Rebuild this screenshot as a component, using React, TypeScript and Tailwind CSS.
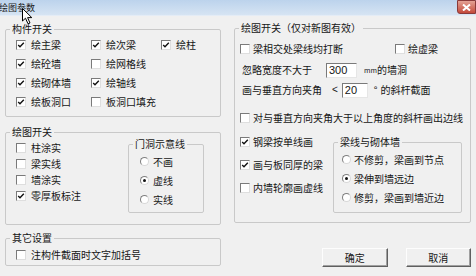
import * as React from "react";

function Box({ checked }: { checked?: boolean }) {
  return (
    <span className="flex h-[10px] w-[10px] shrink-0 items-center justify-center border border-t-[#7a7a7a] border-l-[#7a7a7a] border-b-[#dedede] border-r-[#dedede] bg-white">
      {checked && (
        <svg width="8" height="8" viewBox="0 0 8 8">
          <polyline points="1.2,4 3,5.8 6.8,1.8" fill="none" stroke="#111" strokeWidth="1.4" />
        </svg>
      )}
    </span>
  );
}

function Check({ label, checked, tight }: { label: string; checked?: boolean; tight?: boolean }) {
  return (
    <div className="flex items-center whitespace-nowrap">
      <Box checked={checked} />
      <span className={tight ? "ml-[3px]" : "ml-[5px]"}>{label}</span>
    </div>
  );
}

function Radio({ label, checked, tight }: { label: string; checked?: boolean; tight?: boolean }) {
  return (
    <div className="flex h-[19px] items-center whitespace-nowrap">
      <span className="flex h-[9px] w-[9px] shrink-0 items-center justify-center rounded-full border border-t-[#7f7f7f] border-l-[#7f7f7f] border-b-[#d8d8d8] border-r-[#d8d8d8] bg-white">
        {checked && <span className="h-[3px] w-[3px] rounded-full bg-[#111]" />}
      </span>
      <span className={tight ? "ml-[3px]" : "ml-[4px]"}>{label}</span>
    </div>
  );
}

function Group({ title, className, children }: { title: string; className?: string; children?: React.ReactNode }) {
  return (
    <fieldset className={"rounded-[2px] border border-[#c9c9c9] " + (className ?? "")}>
      <legend className="ml-[4px] px-[2px] text-[10px] leading-[12px]">{title}</legend>
      {children}
    </fieldset>
  );
}

function Btn({ label }: { label: string }) {
  return (
    <div className="flex h-[19px] w-[66px] items-center justify-center border border-t-[#fdfdfd] border-l-[#fdfdfd] border-b-[#5f5f5f] border-r-[#5f5f5f] bg-[#f0f0f0] shadow-[inset_-1px_-1px_0_#a0a0a0]">
      {label}
    </div>
  );
}

export default function App() {
  return (
    <div className="relative h-[276px] w-[476px] overflow-hidden bg-[#f0f0f0] font-['Noto_Sans_CJK_SC','Noto_Sans',sans-serif] text-[10px] leading-[12px] text-[#161616]">
      {/* title bar */}
      <div className="flex h-[16px] items-start justify-between border-b border-[#e4ecf6] bg-linear-to-b from-[#bcd3ec] to-[#d6e4f3]">
        <span className="ml-[-1px] mt-[3px] text-[9px] leading-[10px] text-[#1b1b1b]">绘图参数</span>
        <div className="flex h-[14px] w-[19px] items-center justify-center rounded-bl-[3px] border border-[#8a3a3a] bg-linear-to-b from-[#e3a195] to-[#c3483a]">
          <svg width="9" height="7" viewBox="0 0 9 7">
            <path d="M1 0.5 L8 6.5 M8 0.5 L1 6.5" stroke="#fff" strokeWidth="2" />
          </svg>
        </div>
      </div>
      <svg className="absolute left-[22px] top-[8px]" width="11" height="17" viewBox="0 0 11 17">
        <path d="M0.5 0.5 L0.5 13 L3.5 10.2 L6 15.8 L8 15 L5.6 9.6 L9.8 9.6 Z" fill="#fff" stroke="#000" strokeWidth="1" />
      </svg>

      <div className="flex pl-[5px] pt-[6px]">
        {/* left column */}
        <div className="flex w-[216px] flex-col">
          <Group title="构件开关" className="mt-[1px] h-[94px]">
            <div className="grid auto-rows-[19px] grid-cols-[75px_70px_1fr] items-center pl-[10px]">
              <Check label="绘主梁" checked />
              <Check label="绘次梁" checked />
              <Check label="绘柱" checked />
              <Check label="绘砼墙" checked />
              <Check label="绘网格线" />
              <div />
              <Check label="绘砌体墙" checked />
              <Check label="绘轴线" checked />
              <div />
              <Check label="绘板洞口" checked />
              <Check label="板洞口填充" />
            </div>
          </Group>

          <Group title="绘图开关" className="mt-[9px] h-[99px]">
            <div className="flex">
              <div className="flex w-[122px] flex-col pl-[10px] pt-[2px]">
                <div className="flex h-[16px] items-center"><Check label="柱涂实" /></div>
                <div className="flex h-[16px] items-center"><Check label="梁实线" /></div>
                <div className="flex h-[16px] items-center"><Check label="墙涂实" /></div>
                <div className="flex h-[16px] items-center"><Check label="零厚板标注" checked /></div>
              </div>
              <Group title="门洞示意线" className="h-[75px] w-[76px]">
                <div className="flex flex-col pl-[11px] pt-[2px]">
                  <Radio label="不画" />
                  <Radio label="虚线" checked />
                  <Radio label="实线" />
                </div>
              </Group>
            </div>
          </Group>

          <Group title="其它设置" className="mt-[7px] h-[34px]">
            <div className="flex h-[22px] items-center pl-[10px]">
              <Check label="注构件截面时文字加括号" />
            </div>
          </Group>
        </div>

        {/* right column */}
        <div className="ml-[13px] flex w-[237px] flex-col">
          <Group title="绘图开关（仅对新图有效）" className="h-[201px]">
            <div className="mt-[5px] flex h-[19px] items-center pl-[5px]">
              <div className="w-[155px]"><Check label="梁相交处梁线均打断" tight /></div>
              <Check label="绘虚梁" tight />
            </div>
            <div className="mt-[2px] flex h-[20px] items-center pl-[7px] whitespace-nowrap">
              <span>忽略宽度不大于</span>
              <div className="ml-[14px] flex h-[15px] w-[31px] items-center border border-t-[#7a7a7a] border-l-[#7a7a7a] border-b-[#e6e6e6] border-r-[#e6e6e6] bg-white pl-[2px] font-['Liberation_Sans',sans-serif] text-[11px]">300</div>
              <span className="ml-[7px] text-[7px]">mm</span>
              <span>的墙洞</span>
            </div>
            <div className="flex h-[20px] items-center pl-[7px] whitespace-nowrap">
              <span>画与垂直方向夹角</span>
              <span className="ml-[10px] font-['Liberation_Sans',sans-serif]">&lt;</span>
              <div className="ml-[4px] flex h-[15px] w-[26px] items-center border border-t-[#7a7a7a] border-l-[#7a7a7a] border-b-[#e6e6e6] border-r-[#e6e6e6] bg-white pl-[2px] font-['Liberation_Sans',sans-serif] text-[11px]">20</div>
              <span className="ml-[6px]">°</span>
              <span className="ml-[3px]">的斜杆截面</span>
            </div>
            <div className="mt-[8px] flex h-[20px] items-center pl-[5px]">
              <Check label="对与垂直方向夹角大于以上角度的斜杆画出边线" tight />
            </div>
            <div className="flex">
              <div className="flex w-[98px] flex-col pl-[5px] pt-[2px]">
                <div className="flex h-[23px] items-center"><Check label="钢梁按单线画" checked tight /></div>
                <div className="flex h-[23px] items-center"><Check label="画与板同厚的梁" checked tight /></div>
                <div className="flex h-[23px] items-center"><Check label="内墙轮廓画虚线" tight /></div>
              </div>
              <Group title="梁线与砌体墙" className="mt-[8px] h-[77px] w-[129px]">
                <div className="flex flex-col pl-[8px] pt-[2px]">
                  <Radio label="不修剪，梁画到节点" tight />
                  <Radio label="梁伸到墙远边" checked tight />
                  <Radio label="修剪，梁画到墙近边" tight />
                </div>
              </Group>
            </div>
          </Group>
          <div className="mt-[25px] flex gap-[18px] pl-[88px]">
            <Btn label="确定" />
            <Btn label="取消" />
          </div>
        </div>
      </div>
    </div>
  );
}
